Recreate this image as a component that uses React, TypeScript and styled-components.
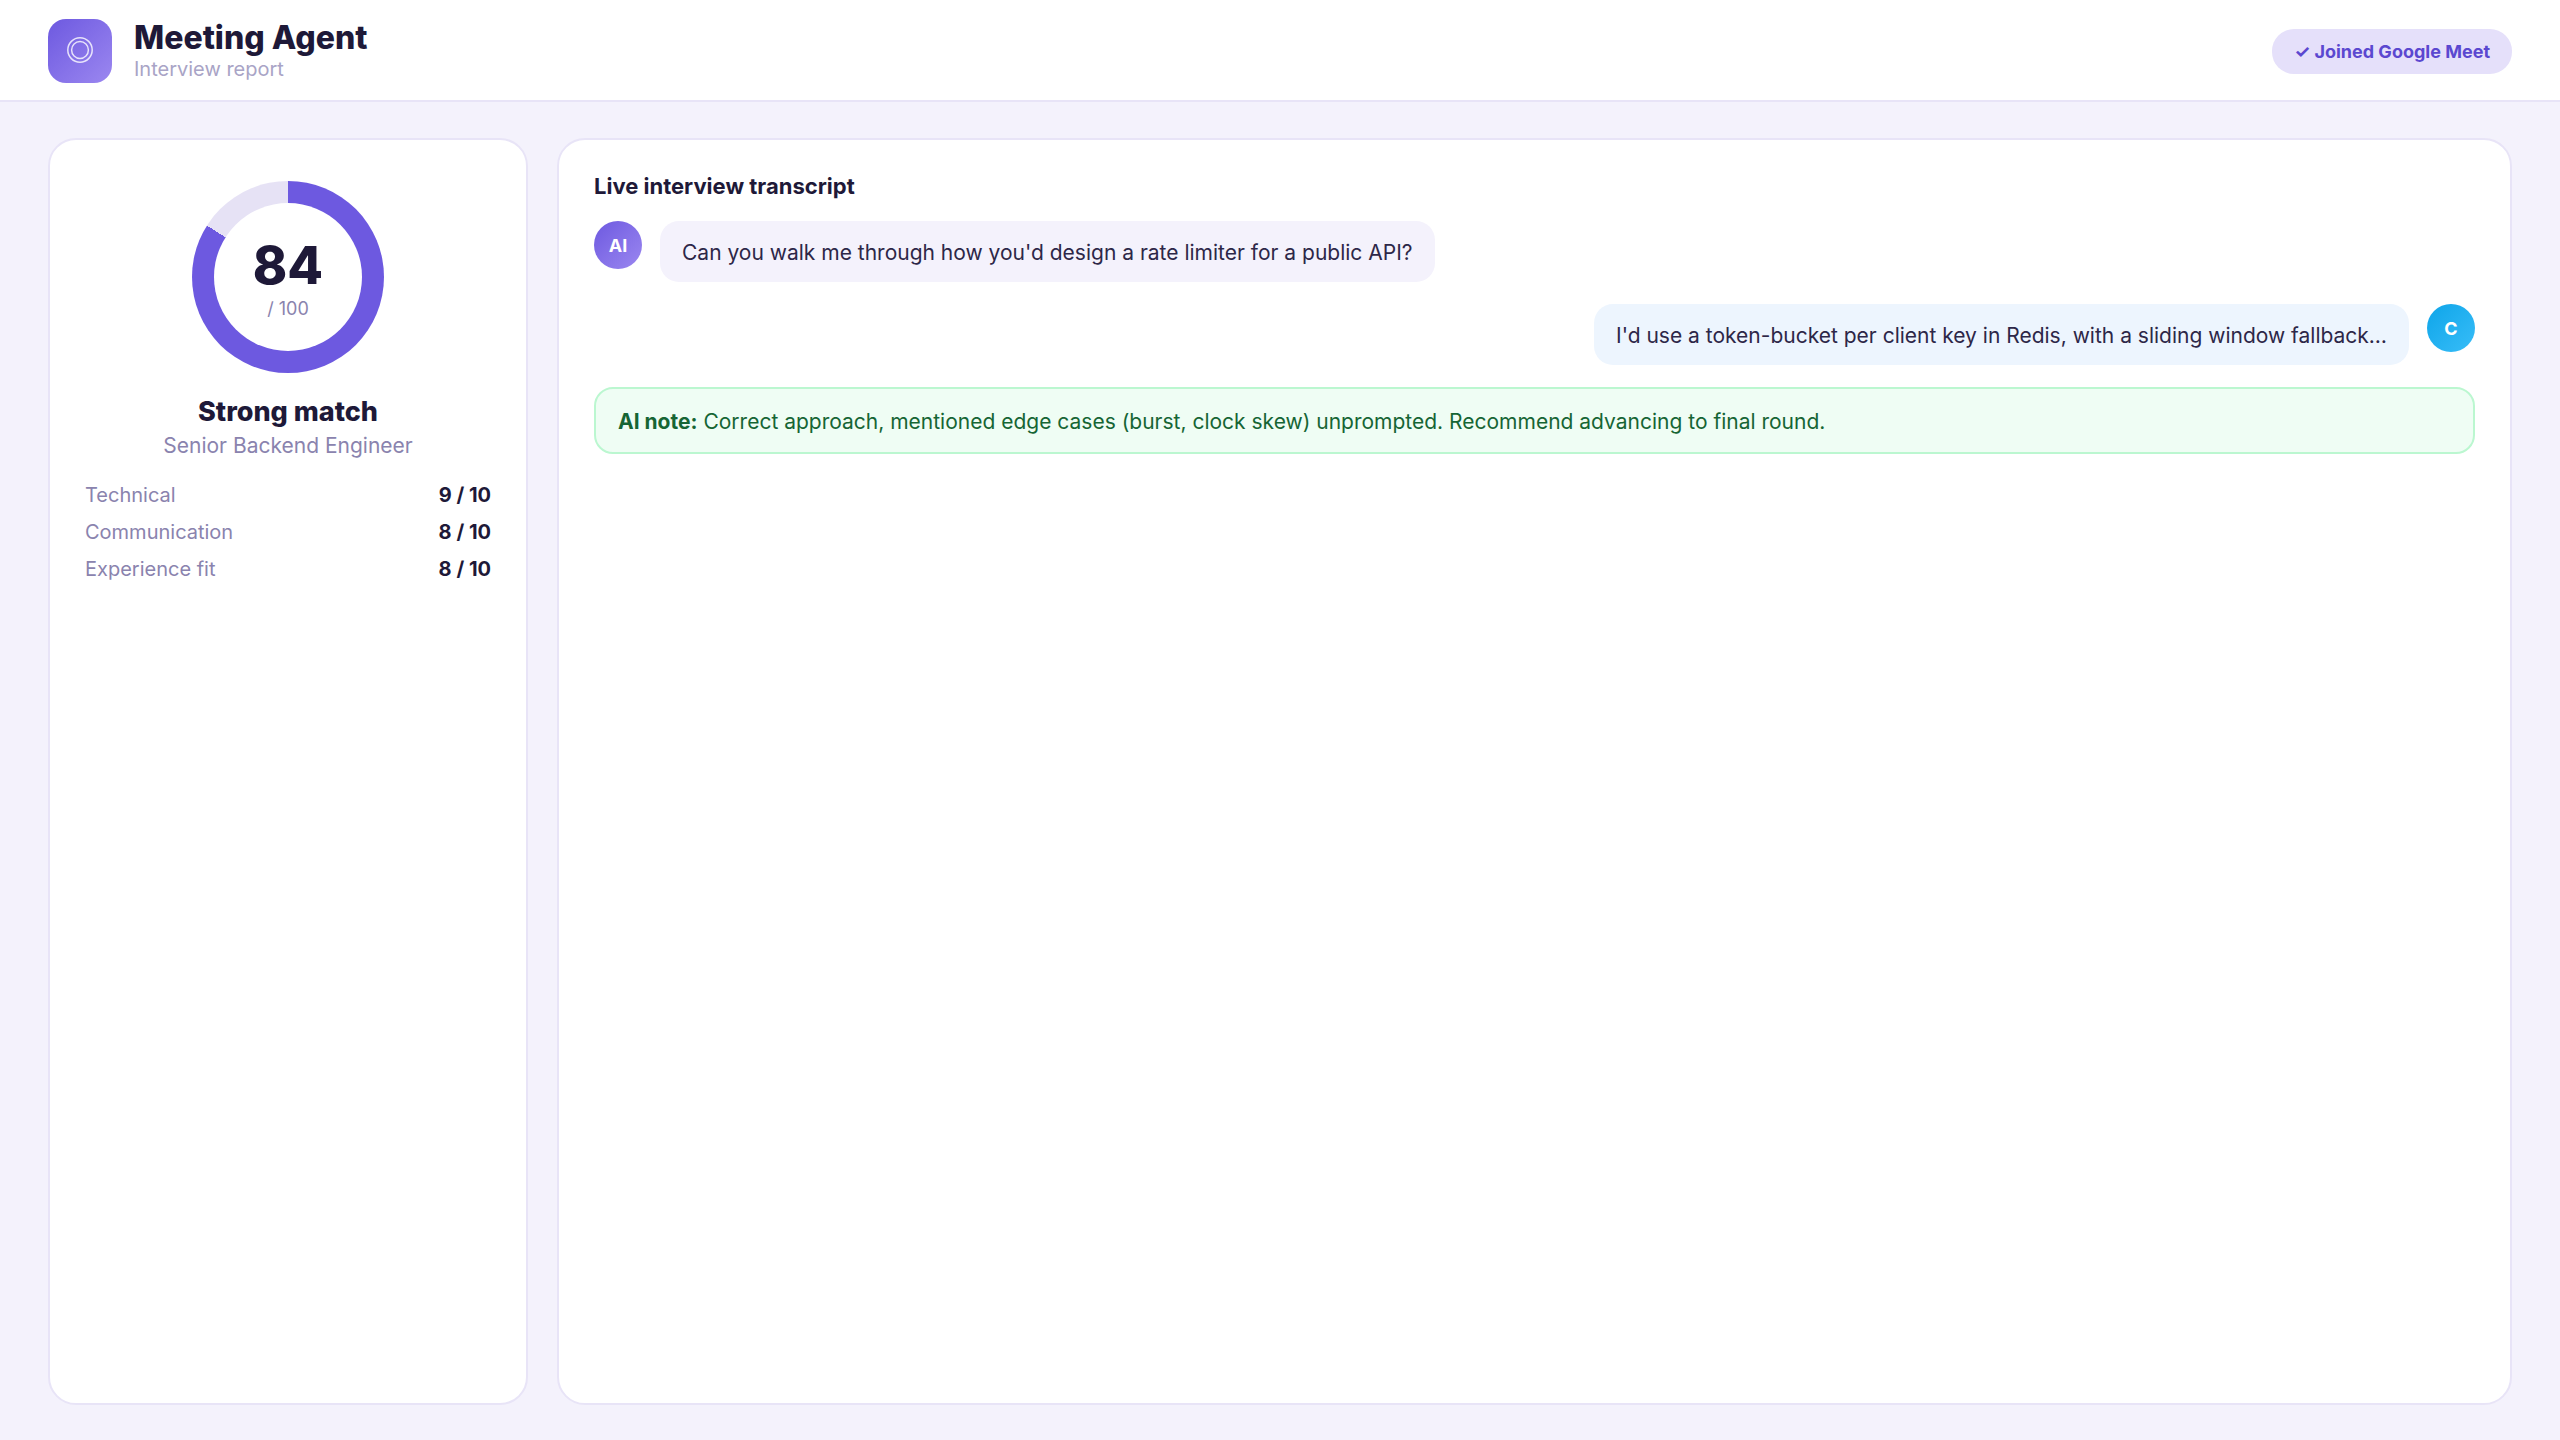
import React from 'react';
import styled, { createGlobalStyle } from 'styled-components';

const GlobalStyle = createGlobalStyle`
  *, *::before, *::after { box-sizing: border-box; }
  body {
    margin: 0;
    background: #f4f2fc;
    color: #1e1938;
    font-family: Inter, "Liberation Sans", sans-serif;
  }
  h1, h2, p, dl, dd, ol { margin: 0; padding: 0; }
`;

const Page = styled.div`
  min-height: 100vh;
  display: flex;
  flex-direction: column;
`;

const Header = styled.header`
  display: flex;
  align-items: center;
  justify-content: space-between;
  padding: 19px 48px 17px;
  background: #ffffff;
  border-bottom: 2px solid #e8e4f7;
`;

const Brand = styled.div`
  display: flex;
  align-items: flex-start;
  gap: 22px;
`;

const Logo = styled.div`
  display: flex;
  width: 64px;
  height: 64px;
  border-radius: 18px;
  background: linear-gradient(135deg, #6d59e0, #9b87f0);
`;

const BrandName = styled.h1`
  font-size: 32px;
  font-weight: 800;
  line-height: 38px;
`;

const BrandSub = styled.p`
  font-size: 20px;
  line-height: 24px;
  color: #a9a4c6;
`;

const Status = styled.div`
  padding: 11px 22px;
  border-radius: 22px;
  background: #e5e0fa;
  color: #5b48d0;
  font-size: 18px;
  font-weight: 700;
  line-height: 23px;
`;

const Main = styled.main`
  flex: 1;
  display: grid;
  grid-template-columns: 480px 1fr;
  gap: 29px;
  padding: 36px 48px 35px;
`;

const Card = styled.section`
  display: flex;
  flex-direction: column;
  padding: 35px;
  background: #ffffff;
  border: 2px solid #e8e4f7;
  border-radius: 28px;
`;

const Ring = styled.div<{ $value: number }>`
  display: grid;
  place-items: center;
  align-self: center;
  width: 192px;
  height: 192px;
  margin-top: 6px;
  border-radius: 50%;
  background: conic-gradient(#6d59e0 ${p => p.$value}%, #e6e2f5 0);
`;

const RingCenter = styled.div`
  display: flex;
  flex-direction: column;
  align-items: center;
  justify-content: center;
  width: 148px;
  height: 148px;
  border-radius: 50%;
  background: #ffffff;
`;

const Score = styled.span`
  font-size: 52px;
  font-weight: 800;
  line-height: 64px;
`;

const ScoreMax = styled.span`
  font-size: 18px;
  line-height: 22px;
  color: #8a83ae;
`;

const Verdict = styled.h2`
  margin-top: 22px;
  font-size: 27px;
  font-weight: 800;
  line-height: 33px;
  text-align: center;
`;

const Role = styled.p`
  margin-top: 5px;
  font-size: 21px;
  line-height: 25px;
  text-align: center;
  color: #8a83ae;
`;

const Criteria = styled.dl`
  display: grid;
  gap: 12px;
  margin-top: 25px;
`;

const Criterion = styled.div`
  display: flex;
  justify-content: space-between;
  font-size: 20px;
  line-height: 25px;

  dt { color: #8a83ae; }
  dd { font-weight: 700; }
`;

const Heading = styled.h2`
  font-size: 22px;
  font-weight: 700;
  line-height: 22px;
`;

const Messages = styled.ol`
  display: grid;
  gap: 22px;
  margin: 24px 0 22px;
  list-style: none;
`;

const Message = styled.li<{ $own: boolean }>`
  display: flex;
  flex-direction: ${p => (p.$own ? 'row-reverse' : 'row')};
  align-items: flex-start;
  gap: 18px;
`;

const Avatar = styled.div<{ $own: boolean }>`
  display: grid;
  place-items: center;
  width: 48px;
  height: 48px;
  flex: none;
  border-radius: 50%;
  background: ${p => (p.$own
    ? 'linear-gradient(135deg, #0ea5e9, #38bdf8)'
    : 'linear-gradient(135deg, #6d59e0, #9b87f0)')};
  color: #ffffff;
  font-size: 18px;
  font-weight: 700;
`;

const Bubble = styled.p<{ $own: boolean }>`
  padding: 15px 22px 13px;
  border-radius: 19px;
  background: ${p => (p.$own ? '#edf5fe' : '#f4f2fc')};
  color: #2d2748;
  font-size: 21px;
  line-height: 33px;
`;

const Note = styled.p`
  padding: 16px 22px 14px;
  border: 2px solid #bbf7d0;
  border-radius: 19px;
  background: #effdf4;
  color: #166534;
  font-size: 21px;
  line-height: 33px;
`;

const criteria = [
  { name: 'Technical', score: 9 },
  { name: 'Communication', score: 8 },
  { name: 'Experience fit', score: 8 },
];

const messages = [
  { from: 'AI', own: false, text: "Can you walk me through how you'd design a rate limiter for a public API?" },
  { from: 'C', own: true, text: "I'd use a token-bucket per client key in Redis, with a sliding window fallback…" },
];

export default function App() {
  return (
    <Page>
      <GlobalStyle />
      <Header>
        <Brand>
          <Logo>
            <svg width="64" height="64" viewBox="0 0 64 64" fill="none" stroke="#ffffff" strokeOpacity="0.8" strokeWidth="1.5" aria-hidden="true">
              <circle cx="32" cy="31" r="12.2" />
              <circle cx="32" cy="31" r="8.4" />
            </svg>
          </Logo>
          <div>
            <BrandName>Meeting Agent</BrandName>
            <BrandSub>Interview report</BrandSub>
          </div>
        </Brand>
        <Status>✓ Joined Google Meet</Status>
      </Header>
      <Main>
        <Card>
          <Ring $value={84}>
            <RingCenter>
              <Score>84</Score>
              <ScoreMax>/ 100</ScoreMax>
            </RingCenter>
          </Ring>
          <Verdict>Strong match</Verdict>
          <Role>Senior Backend Engineer</Role>
          <Criteria>
            {criteria.map(c => (
              <Criterion key={c.name}>
                <dt>{c.name}</dt>
                <dd>{c.score} / 10</dd>
              </Criterion>
            ))}
          </Criteria>
        </Card>
        <Card>
          <Heading>Live interview transcript</Heading>
          <Messages>
            {messages.map(m => (
              <Message key={m.from} $own={m.own}>
                <Avatar $own={m.own}>{m.from}</Avatar>
                <Bubble $own={m.own}>{m.text}</Bubble>
              </Message>
            ))}
          </Messages>
          <Note>
            <strong>AI note:</strong> Correct approach, mentioned edge cases (burst, clock skew) unprompted. Recommend advancing to final round.
          </Note>
        </Card>
      </Main>
    </Page>
  );
}
